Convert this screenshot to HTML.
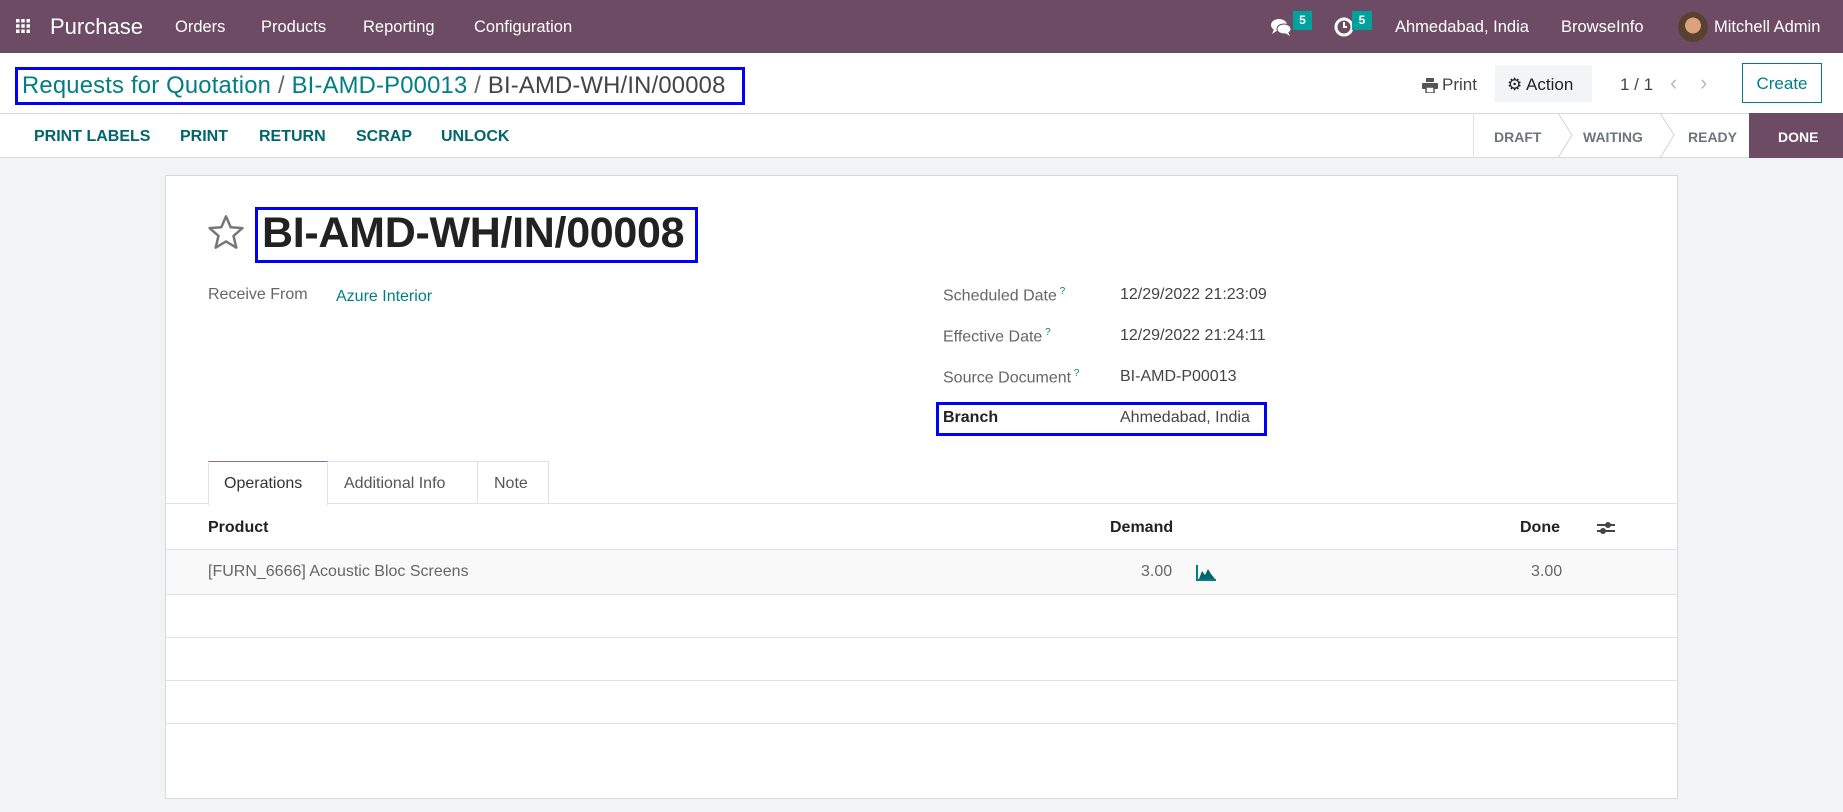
<!DOCTYPE html>
<html><head><meta charset="utf-8"><style>
*{box-sizing:border-box;margin:0;padding:0}
body{width:1843px;height:812px;overflow:hidden;background:#f2f3f5;font-family:"Liberation Sans",sans-serif;color:#4c4c4c;position:relative}
.a{position:absolute;white-space:nowrap}
.nav{position:absolute;left:0;top:0;width:1843px;height:53px;background:#6e4b64}
.nav .a{color:#fff;font-size:16.5px;top:18px}
.cp{position:absolute;left:0;top:53px;width:1843px;height:105px;background:#fff;border-bottom:1px solid #d8dadd}
.teal{color:#017e84}
.btn{color:#00666b;font-weight:bold;font-size:16px;top:128px}
.st{font-size:14px;font-weight:bold;color:#6c757d;top:129px}
.sheet{position:absolute;left:165px;top:175px;width:1513px;height:624px;background:#fff;border:1px solid #d8dadd}
.lbl{font-size:16px;color:#666}
.val{font-size:16px;color:#444}
sup{color:#017e84;font-size:10px}
.hl{position:absolute;height:1px;background:#dee2e6}
</style></head><body>
<div class="nav">
  <svg class="a" style="left:16px;top:19px" width="14" height="14" viewBox="0 0 14 14" fill="#fff"><rect x="0" y="0" width="3.5" height="3.5"/><rect x="5.25" y="0" width="3.5" height="3.5"/><rect x="10.5" y="0" width="3.5" height="3.5"/><rect x="0" y="5.25" width="3.5" height="3.5"/><rect x="5.25" y="5.25" width="3.5" height="3.5"/><rect x="10.5" y="5.25" width="3.5" height="3.5"/><rect x="0" y="10.5" width="3.5" height="3.5"/><rect x="5.25" y="10.5" width="3.5" height="3.5"/><rect x="10.5" y="10.5" width="3.5" height="3.5"/></svg>
  <div class="a" style="left:50px;top:14px;font-size:22px">Purchase</div>
  <div class="a" style="left:175px">Orders</div>
  <div class="a" style="left:261px">Products</div>
  <div class="a" style="left:363px">Reporting</div>
  <div class="a" style="left:474px">Configuration</div>
  <svg class="a" style="left:1270px;top:17px" width="22" height="20" viewBox="0 0 22 20" fill="#fff"><ellipse cx="9" cy="8" rx="8" ry="6"/><path d="M4 12 L2 17 L8 13Z"/><ellipse cx="14" cy="12" rx="7" ry="5" fill="#fff" stroke="#6e4b64" stroke-width="1"/><path d="M18 15 L20 19 L15 16Z"/></svg>
  <div class="a" style="left:1293px;top:11px;width:19px;height:19px;background:#00a09d;color:#fff;font-size:12px;text-align:center;line-height:19px;font-weight:bold">5</div>
  <svg class="a" style="left:1334px;top:17px" width="20" height="20" viewBox="0 0 20 20"><circle cx="10" cy="10" r="8" fill="none" stroke="#fff" stroke-width="3"/><path d="M10 5 V10 H13" stroke="#fff" stroke-width="2" fill="none"/></svg>
  <div class="a" style="left:1352px;top:11px;width:20px;height:19px;background:#00a09d;color:#fff;font-size:12px;text-align:center;line-height:19px;font-weight:bold">5</div>
  <div class="a" style="left:1395px">Ahmedabad, India</div>
  <div class="a" style="left:1561px">BrowseInfo</div>
  <div class="a" style="left:1678px;top:12px;width:30px;height:30px;border-radius:50%;background:radial-gradient(circle at 50% 45%,#d9a37e 0 35%,#5a4030 36% 100%)"></div>
  <div class="a" style="left:1714px">Mitchell Admin</div>
</div>
<div class="cp">
  <div class="a" style="left:15px;top:14px;width:730px;height:38px;border:3px solid #0000ff"></div>
  <div class="a" style="left:22px;top:19px;font-size:23.8px;letter-spacing:0.2px"><span class="teal">Requests for Quotation</span> <span style="color:#666">/</span> <span class="teal">BI-AMD-P00013</span> <span style="color:#666">/</span> <span style="color:#444">BI-AMD-WH/IN/00008</span></div>
  <svg class="a" style="left:1422px;top:25px" width="16" height="15" viewBox="0 0 16 15" fill="#555"><rect x="4" y="0" width="8" height="4"/><rect x="0" y="5" width="16" height="6" rx="1"/><rect x="4" y="9" width="8" height="6" fill="#fff" stroke="#555" stroke-width="1.5"/></svg>
  <div class="a" style="left:1442px;top:22px;font-size:17px;color:#444">Print</div>
  <div class="a" style="left:1495px;top:12px;width:97px;height:37px;background:#f3f4f6"></div>
  <div class="a" style="left:1507px;top:22px;font-size:17px;color:#222">⚙ Action</div>
  <div class="a" style="left:1620px;top:22px;font-size:17px;color:#444">1 / 1</div>
  <div class="a" style="left:1670px;top:17px;font-size:22px;color:#bbb">‹</div>
  <div class="a" style="left:1700px;top:17px;font-size:22px;color:#bbb">›</div>
  <div class="a" style="left:1742px;top:10px;width:80px;height:40px;border:1px solid #017e84;color:#017e84;font-size:17px;text-align:center;line-height:40px">Create</div>
  <div class="hl" style="left:0;top:60px;width:1843px;background:#d8dadd"></div>
</div>
<div class="a btn" style="left:34px">PRINT LABELS</div>
<div class="a btn" style="left:180px">PRINT</div>
<div class="a btn" style="left:259px">RETURN</div>
<div class="a btn" style="left:356px">SCRAP</div>
<div class="a btn" style="left:441px">UNLOCK</div>
<div class="a" style="left:1473px;top:113px;width:1px;height:45px;background:#dee2e6"></div>
<svg class="a" style="left:1550px;top:113px" width="250" height="45"><path d="M8 0 L22 22 L8 45 M110 0 L124 22 L110 45" fill="none" stroke="#d0d3d6"/><path d="M199 0 H250 V45 H199 L213 22Z" fill="#6e4b64"/></svg>
<div class="a" style="left:1749px;top:113px;width:94px;height:45px;background:#6e4b64"></div>
<div class="a st" style="left:1494px">DRAFT</div>
<div class="a st" style="left:1583px">WAITING</div>
<div class="a st" style="left:1688px">READY</div>
<div class="a st" style="left:1778px;color:#fff">DONE</div>

<div class="sheet"></div>
<svg class="a" style="left:207px;top:214px" width="38" height="36" viewBox="0 0 24 23"><path d="M12 1.5 L15 8.5 L22.5 9 L16.8 14 L18.6 21.5 L12 17.5 L5.4 21.5 L7.2 14 L1.5 9 L9 8.5Z" fill="none" stroke="#777" stroke-width="1.6" stroke-linejoin="round"/></svg>
<div class="a" style="left:255px;top:207px;width:443px;height:56px;border:3px solid #0000ff;background:#fff"></div>
<div class="a" style="left:262px;top:209px;font-size:43px;font-weight:bold;color:#222;letter-spacing:-0.3px">BI-AMD-WH/IN/00008</div>
<div class="a lbl" style="left:208px;top:286px">Receive From</div>
<div class="a val" style="left:336px;top:288px;color:#017e84">Azure Interior</div>
<div class="a lbl" style="left:943px;top:286px">Scheduled Date<sup> ?</sup></div>
<div class="a val" style="left:1120px;top:286px">12/29/2022 21:23:09</div>
<div class="a lbl" style="left:943px;top:327px">Effective Date<sup> ?</sup></div>
<div class="a val" style="left:1120px;top:327px">12/29/2022 21:24:11</div>
<div class="a lbl" style="left:943px;top:368px">Source Document<sup> ?</sup></div>
<div class="a val" style="left:1120px;top:368px">BI-AMD-P00013</div>
<div class="a" style="left:936px;top:402px;width:331px;height:34px;border:3px solid #0000ff"></div>
<div class="a" style="left:943px;top:409px;font-size:16px;font-weight:bold;color:#222">Branch</div>
<div class="a val" style="left:1120px;top:409px">Ahmedabad, India</div>

<div class="a" style="left:208px;top:461px;width:341px;height:43px;border:1px solid #dee2e6;border-bottom:none"></div>
<div class="a" style="left:477px;top:461px;width:1px;height:42px;background:#dee2e6"></div>
<div class="hl" style="left:166px;top:503px;width:1511px"></div>
<div class="a" style="left:208px;top:461px;width:120px;height:44px;background:#fff;border-left:1px solid #dee2e6;border-right:1px solid #dee2e6;border-top:1px solid #8f6b85"></div>
<div class="a" style="left:224px;top:475px;font-size:16px;color:#333">Operations</div>
<div class="a" style="left:344px;top:475px;font-size:16px;color:#555">Additional Info</div>
<div class="a" style="left:494px;top:475px;font-size:16px;color:#555">Note</div>

<div class="a" style="left:208px;top:519px;font-size:16px;font-weight:bold;color:#222">Product</div>
<div class="a" style="left:1110px;top:519px;font-size:16px;font-weight:bold;color:#222">Demand</div>
<div class="a" style="left:1520px;top:519px;font-size:16px;font-weight:bold;color:#222">Done</div>
<svg class="a" style="left:1597px;top:520px" width="18" height="16" viewBox="0 0 18 16"><path d="M0 5 H18 M0 11 H18" stroke="#444" stroke-width="2"/><circle cx="11" cy="5" r="3" fill="#444"/><circle cx="6" cy="11" r="3" fill="#444"/></svg>
<div class="hl" style="left:166px;top:549px;width:1511px"></div>
<div class="a" style="left:166px;top:550px;width:1511px;height:44px;background:#f9f9f9"></div>
<div class="a" style="left:208px;top:563px;font-size:16px;color:#666">[FURN_6666] Acoustic Bloc Screens</div>
<div class="a" style="left:1141px;top:563px;font-size:16px;color:#666">3.00</div>
<svg class="a" style="left:1196px;top:565px" width="20" height="16" viewBox="0 0 20 16"><path d="M1 0 V15 H20" stroke="#017e84" stroke-width="2" fill="none"/><path d="M3 14 L6 6 L9 10 L12 4 L15 9 L19 14Z" fill="#00666b"/></svg>
<div class="a" style="left:1531px;top:563px;font-size:16px;color:#666">3.00</div>
<div class="hl" style="left:166px;top:594px;width:1511px"></div>
<div class="hl" style="left:166px;top:637px;width:1511px"></div>
<div class="hl" style="left:166px;top:680px;width:1511px"></div>
<div class="hl" style="left:166px;top:723px;width:1511px"></div>
</body></html>
